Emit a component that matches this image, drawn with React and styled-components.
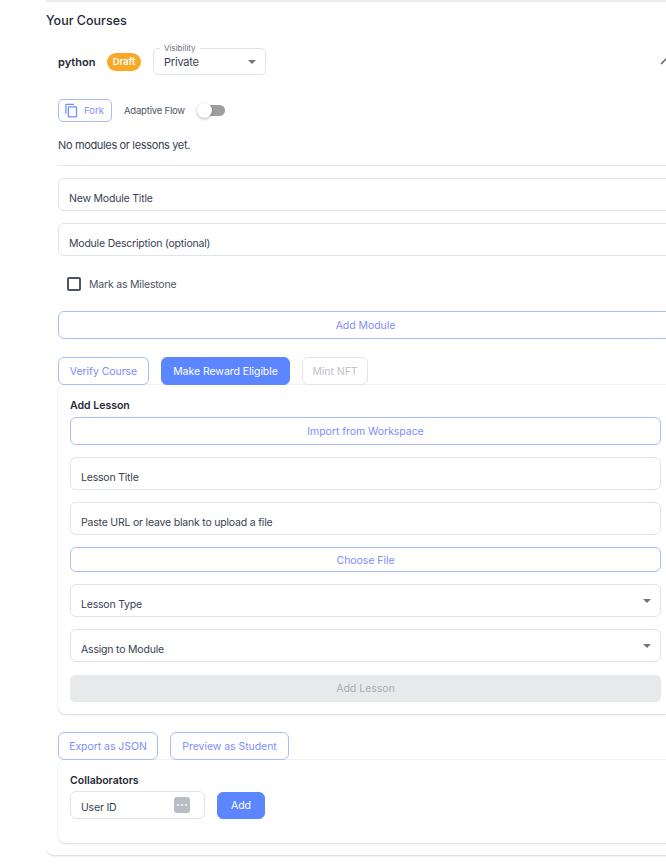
import React from 'react'
import styled, { createGlobalStyle } from 'styled-components'

const GlobalStyle = createGlobalStyle`
  html, body {
    margin: 0;
    padding: 0;
    background: #fff;
    overflow: hidden;
  }
  body {
    font-family: "Inter", "Liberation Sans", sans-serif;
    color: #374151;
  }
`

const Page = styled.div`
  width: 666px;
  height: 865px;
  overflow: hidden;
  padding-left: 46px;
  box-sizing: border-box;
`
const Section = styled.section`
  width: 639px;
  box-sizing: border-box;
  border-top: 2px solid #ececef;
`
const Heading = styled.h2`
  margin: 0;
  padding-top: 11px;
  height: 30px;
  box-sizing: border-box;
  font-size: 12.5px;
  line-height: 15px;
  font-weight: 500;
  color: #1f2937;
`
const Card = styled.div`
  height: 823px;
  box-sizing: border-box;
  padding: 16px 12px 12px;
  border-radius: 8px;
  background: #fff;
  box-shadow: 0 2px 2px -1px rgba(0, 0, 0, 0.16), 0 0 1px rgba(0, 0, 0, 0.06);
`
const CourseRow = styled.div`
  display: flex;
  align-items: center;
  height: 27px;
  position: relative;
`
const CourseName = styled.span`
  font-size: 11px;
  font-weight: 600;
  color: #1f2937;
  width: 49px;
`
const Badge = styled.span`
  display: inline-flex;
  align-items: center;
  justify-content: center;
  width: 34px;
  height: 18px;
  border-radius: 9px;
  background: #f9a825;
  color: #fff;
  font-size: 9.5px;
  font-weight: 600;
  margin-right: 12px;
`
const SelectBox = styled.div`
  position: relative;
  width: 113px;
  height: 27px;
  box-sizing: border-box;
  border: 1px solid #dfe3ee;
  border-radius: 5px;
  display: flex;
  align-items: center;
  padding-left: 10px;
  font-size: 11px;
  letter-spacing: -0.2px;
  color: #374151;
`
const Legend = styled.span`
  position: absolute;
  top: -6px;
  left: 6px;
  padding: 0 4px;
  background: #fff;
  font-size: 8px;
  line-height: 10px;
  letter-spacing: 0;
  color: #6b7280;
`
const Caret = styled.span`
  position: absolute;
  right: 9px;
  top: 50%;
  margin-top: -2px;
  width: 0;
  height: 0;
  border-left: 4px solid transparent;
  border-right: 4px solid transparent;
  border-top: 4px solid #757575;
`
const Chevron = styled.svg`
  position: absolute;
  left: 602px;
  top: 9px;
  width: 12px;
  height: 10px;
`
const ToolRow = styled.div`
  display: flex;
  align-items: center;
  height: 23px;
  margin-top: 24px;
`
const ForkButton = styled.button`
  display: flex;
  align-items: center;
  gap: 5px;
  width: 54px;
  height: 23px;
  box-sizing: border-box;
  padding: 0 0 0 5px;
  background: #fff;
  border: 1px solid #a9bdfc;
  border-radius: 5px;
  color: #7f8cff;
  font: inherit;
  font-size: 9.5px;
`
const SwitchLabel = styled.span`
  margin-left: 12px;
  font-size: 9.5px;
  letter-spacing: -0.2px;
  color: #4b5563;
`
const SwitchTrack = styled.span`
  position: relative;
  margin-left: 14px;
  width: 26px;
  height: 11px;
  border-radius: 6px;
  background: #9e9e9e;
`
const SwitchKnob = styled.span`
  position: absolute;
  left: -2px;
  top: -2px;
  width: 15px;
  height: 15px;
  border-radius: 50%;
  background: #fff;
  box-shadow: 0 1px 3px rgba(0, 0, 0, 0.3);
`
const Empty = styled.p`
  margin: 16px 0 0;
  height: 14px;
  font-size: 11px;
  line-height: 14px;
  letter-spacing: -0.35px;
  color: #374151;
`
const Divider = styled.hr`
  margin: 13px 0 12px;
  border: 0;
  border-top: 1px solid #e7e7ea;
`
const Field = styled.div`
  position: relative;
  display: flex;
  align-items: flex-end;
  height: ${p => p.$height || 33}px;
  box-sizing: border-box;
  margin-top: ${p => p.$top || 0}px;
  margin-bottom: ${p => p.$gap ?? 12}px;
  padding: 0 10px ${p => p.$pad ?? 5}px;
  width: ${p => p.$width ? `${p.$width}px` : 'auto'};
  border: 1px solid #dfe3ee;
  border-radius: 6px;
  font-size: 10.5px;
  line-height: 13px;
  letter-spacing: -0.2px;
  color: #374151;
`
const CheckRow = styled.label`
  display: flex;
  align-items: center;
  gap: 8px;
  height: 14px;
  margin: 21px 0 20px 9px;
  font-size: 10.5px;
  letter-spacing: -0.2px;
  color: #4b5563;
`
const CheckBox = styled.span`
  width: 14px;
  height: 14px;
  box-sizing: border-box;
  border: 2px solid #4b5563;
  border-radius: 2px;
`
const OutlineButton = styled.button`
  display: block;
  width: ${p => p.$width ? `${p.$width}px` : '100%'};
  height: ${p => p.$height || 28}px;
  box-sizing: border-box;
  padding: ${p => p.$nudge || 0}px 0 0;
  margin-top: ${p => p.$top || 0}px;
  background: #fff;
  border: 1px solid #a9bdfc;
  border-radius: 6px;
  color: #7f8cff;
  font: inherit;
  font-size: 10.5px;
  letter-spacing: -0.05px;
  flex: none;
`
const FilledButton = styled(OutlineButton)`
  background: #5c86ff;
  border-color: #5c86ff;
  color: #fff;
`
const MutedButton = styled(OutlineButton)`
  border-color: #e5e5e8;
  color: #c2c2c6;
`
const ButtonRow = styled.div`
  display: flex;
  gap: 12px;
  margin-top: ${p => p.$top}px;
`
const Panel = styled.div`
  margin-top: -1px;
  padding: 14px 12px ${p => p.$bottom}px;
  border-radius: 8px;
  background: #fff;
  box-shadow: 0 1px 2px rgba(0, 0, 0, 0.16);
  border-top: 1px solid #f2f2f4;
`
const PanelTitle = styled.h3`
  margin: 0 0 ${p => p.$gap ?? 5}px;
  font-size: 10.5px;
  line-height: 13px;
  font-weight: 600;
  color: #1f2937;
`
const DisabledAdd = styled.div`
  display: flex;
  align-items: center;
  justify-content: center;
  height: 27px;
  border-radius: 5px;
  background: #e8e9ea;
  color: #a9acb1;
  font-size: 10.5px;
`
const CollabRow = styled.div`
  display: flex;
  align-items: flex-start;
  gap: 12px;
`
const DotsIcon = styled.span`
  position: absolute;
  right: 14px;
  top: 5px;
  display: flex;
  align-items: center;
  justify-content: center;
  gap: 2px;
  width: 16px;
  height: 16px;
  border-radius: 3px;
  background: #b8bcc4;
`
const Dot = styled.i`
  width: 2px;
  height: 2px;
  border-radius: 50%;
  background: #fff;
`

const ForkIcon = () => (
  <svg width="15" height="15" viewBox="0 0 24 24" fill="#6f8cff">
    <path d="M16 1H4c-1.1 0-2 .9-2 2v14h2V3h12V1zm3 4H8c-1.1 0-2 .9-2 2v14c0 1.1.9 2 2 2h11c1.1 0 2-.9 2-2V7c0-1.100-.9-2-2-2zm0 16H8V7h11v14z" />
  </svg>
)

const App = () => {
  return (
    <Page>
      <GlobalStyle />
      <Section>
        <Heading>Your Courses</Heading>
        <Card>
          <CourseRow>
            <CourseName>python</CourseName>
            <Badge>Draft</Badge>
            <SelectBox>
              <Legend>Visibility</Legend>
              Private
              <Caret />
            </SelectBox>
            <Chevron viewBox="0 0 12 10" fill="none" stroke="#616161" strokeWidth="1.5">
              <path d="M1 7l5-5 5 5" />
            </Chevron>
          </CourseRow>
          <ToolRow>
            <ForkButton><ForkIcon />Fork</ForkButton>
            <SwitchLabel>Adaptive Flow</SwitchLabel>
            <SwitchTrack><SwitchKnob /></SwitchTrack>
          </ToolRow>
          <Empty>No modules or lessons yet.</Empty>
          <Divider />
          <Field>New Module Title</Field>
          <Field $gap={0}>Module Description (optional)</Field>
          <CheckRow><CheckBox />Mark as Milestone</CheckRow>
          <OutlineButton>Add Module</OutlineButton>
          <ButtonRow $top={18}>
            <OutlineButton $width={91}>Verify Course</OutlineButton>
            <FilledButton $width={129}>Make Reward Eligible</FilledButton>
            <MutedButton $width={66}>Mint NFT</MutedButton>
          </ButtonRow>
          <Panel $bottom={12}>
            <PanelTitle>Add Lesson</PanelTitle>
            <OutlineButton>Import from Workspace</OutlineButton>
            <Field $top={12}>Lesson Title</Field>
            <Field>Paste URL or leave blank to upload a file</Field>
            <OutlineButton $height={25} $nudge={1}>Choose File</OutlineButton>
            <Field $top={12}>Lesson Type<Caret /></Field>
            <Field $gap={13}>Assign to Module<Caret /></Field>
            <DisabledAdd>Add Lesson</DisabledAdd>
          </Panel>
          <ButtonRow $top={18}>
            <OutlineButton $width={100}>Export as JSON</OutlineButton>
            <OutlineButton $width={119}>Preview as Student</OutlineButton>
          </ButtonRow>
          <Panel $bottom={24}>
            <PanelTitle $gap={4}>Collaborators</PanelTitle>
            <CollabRow>
              <Field $width={135} $height={28} $gap={0} $pad={4}>
                User ID
                <DotsIcon><Dot /><Dot /><Dot /></DotsIcon>
              </Field>
              <FilledButton $width={48} $height={27} $top={1}>Add</FilledButton>
            </CollabRow>
          </Panel>
        </Card>
      </Section>
    </Page>
  )
}

export default App
